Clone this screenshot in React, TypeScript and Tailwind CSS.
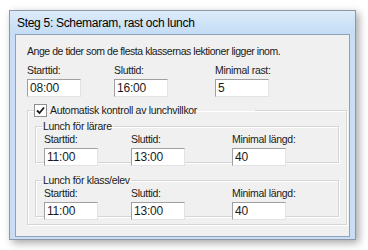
const font = { fontFamily: '"Liberation Sans", Arial, sans-serif' };

function Field({ label, value }: { label: string; value: string }) {
  return (
    <div className="flex flex-col">
      <span className="h-[14px] leading-[14px]">{label}</span>
      <div className="mt-[2px] h-[18px] w-[54px] border border-t-[#a0a0a0] border-l-[#a0a0a0] border-r-[#e3e3e3] border-b-[#e3e3e3] bg-white pl-[2px] text-[12px] leading-[16px] tracking-[-0.2px]">
        {value}
      </div>
    </div>
  );
}

function Row({ values }: { values: [string, string][] }) {
  const widths = ["w-[87px]", "w-[101px]", ""];
  return (
    <div className="flex">
      {values.map(([label, value], i) => (
        <div key={label} className={widths[i]}>
          <Field label={label} value={value} />
        </div>
      ))}
    </div>
  );
}

function LunchGroup({ title }: { title: string }) {
  return (
    <fieldset className="h-[43px] border border-[#d5d5d5] pl-[8px] shadow-[inset_1px_1px_0_#fff,1px_1px_0_#fff]">
      <legend className="ml-[-2px] px-[1px] leading-[12px]">{title}</legend>
      <Row
        values={[
          ["Starttid:", "11:00"],
          ["Sluttid:", "13:00"],
          ["Minimal längd:", "40"],
        ]}
      />
    </fieldset>
  );
}

export default function App() {
  return (
    <div className="h-[250px] w-[368px] overflow-hidden bg-white pl-[9px] pt-[10px] text-[10.5px] tracking-[-0.3px] text-[#1a1a1a]" style={font}>
      <div className="flex h-[230px] w-[347px] flex-col border border-[#8c98a6] bg-[#c9def5] shadow-[3px_3px_8px_rgba(0,0,0,0.35)]">
        <div className="flex h-[23px] items-center bg-gradient-to-b from-[#dcebfa] to-[#c4dcf4] pl-[7px] text-[12px] tracking-[-0.3px] text-black">
          Steg 5: Schemaram, rast och lunch
        </div>
        <div className="mx-[5px] mb-[2px] flex flex-1 flex-col border border-[#8ea3b9] bg-[#f0f0f0] pl-[11px] pr-[2px]">
          <div className="mt-[9px] h-[14px] leading-[14px] tracking-[-0.45px]">
            Ange de tider som de flesta klassernas lektioner ligger inom.
          </div>
          <div className="mt-[5px]">
            <Row
              values={[
                ["Starttid:", "08:00"],
                ["Sluttid:", "16:00"],
                ["Minimal rast:", "5"],
              ]}
            />
          </div>
          <fieldset className="mt-[6px] h-[122px] border border-[#d5d5d5] px-[7px] shadow-[inset_1px_1px_0_#fff,1px_1px_0_#fff]">
            <legend className="ml-[-1px] flex w-[221px] items-center gap-[3px] leading-[14px]">
              <span className="flex h-[13px] w-[13px] items-center justify-center border border-[#8f8f8f] bg-white">
                <svg width="9" height="9" viewBox="0 0 9 9">
                  <path d="M1 4.5 L3.5 7 L8 1.5" fill="none" stroke="#1a1a1a" strokeWidth="1.8" />
                </svg>
              </span>
              Automatisk kontroll av lunchvillkor
            </legend>
            <div className="mt-[3px] flex flex-col gap-[11px]">
              <LunchGroup title="Lunch för lärare" />
              <LunchGroup title="Lunch för klass/elev" />
            </div>
          </fieldset>
        </div>
      </div>
    </div>
  );
}
